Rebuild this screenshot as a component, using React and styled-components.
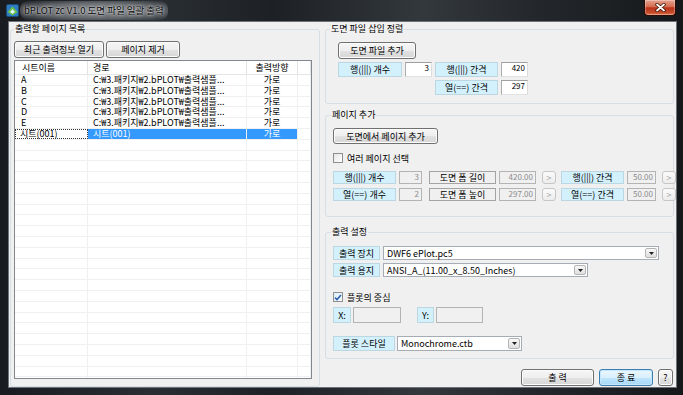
import React from "react";
import styled, { createGlobalStyle } from "styled-components";

const ui = `"Noto Sans CJK KR", "Liberation Sans", sans-serif`;

const GlobalStyle = createGlobalStyle`
  html, body { margin: 0; padding: 0; }
  body { width: 683px; height: 395px; overflow: hidden; background: #16191c; }
  * { box-sizing: border-box; }
`;

const Window = styled.div`
  width: 683px;
  height: 395px;
  display: flex;
  flex-direction: column;
  background: linear-gradient(90deg, #181b1f 0%, #2a2f34 22%, #1d2125 40%, #33383d 62%, #24282c 78%, #15181b 100%);
  font-family: ${ui};
  font-size: 9px;
  color: #000;
`;

const TitleBar = styled.div`
  height: 21px;
  flex-shrink: 0;
  display: flex;
  align-items: flex-start;
  padding-left: 6px;
`;

const AppIcon = styled.svg`
  margin-top: 4px;
  flex-shrink: 0;
`;

const Title = styled.div`
  margin-left: 1px;
  padding: 0 4px;
  margin-top: 1px;
  line-height: 19px;
  font-size: 9.5px;
  color: #0b0b0b;
  border-radius: 8px;
  background: radial-gradient(ellipse at center, rgba(205, 208, 212, 0.6) 0%, rgba(180, 184, 188, 0.45) 55%, rgba(120, 124, 128, 0) 100%);
  text-shadow: 0 0 2px rgba(245, 245, 245, 0.9), 0 0 5px rgba(225, 225, 225, 0.8);
`;

const CloseBtn = styled.div`
  margin-left: auto;
  margin-right: 7px;
  width: 32px;
  height: 16px;
  border: 1px solid #2b0c05;
  border-top: none;
  border-radius: 0 0 4px 4px;
  background: linear-gradient(#e6a28f 0%, #d46c50 45%, #b8321a 52%, #c64d2b 85%, #dc7a55 100%);
  box-shadow: inset 0 0 0 1px rgba(255, 255, 255, 0.3);
  display: flex;
  align-items: center;
  justify-content: center;
`;

const Client = styled.div`
  flex: 1;
  margin: 0 6px 7px 8px;
  border: 1px solid #6c7278;
  background: #f0f0f0;
  display: flex;
  gap: 5px;
  padding: 0 2px 0 1px;
`;

const Group = styled.fieldset`
  margin: 0;
  min-width: 0;
  border: 1px solid #d5dfe5;
  border-radius: 3px;
  padding: ${(p) => p.$pad};
  margin-top: ${(p) => p.$top || 0}px;
`;

const Legend = styled.legend`
  padding: 0 1px;
  margin-left: ${(p) => p.$shift || 0}px;
  line-height: 14px;
  font-size: 9px;
`;

const LeftGroup = styled(Group)`
  width: 310px;
  height: 365px;
`;

const RightColumn = styled.div`
  width: 349px;
  display: flex;
  flex-direction: column;
`;

const Btn = styled.button`
  width: ${(p) => p.$w}px;
  height: ${(p) => p.$h || 17}px;
  padding: 0;
  font-family: ${ui};
  font-size: 9px;
  color: #000;
  border: 1px solid ${(p) => (p.$focus ? "#3c7fb1" : "#707070")};
  border-radius: 3px;
  background: ${(p) =>
    p.$focus
      ? "linear-gradient(#eaf6fd 0%, #d9f0fc 50%, #bee6fd 51%, #a7d9f5 100%)"
      : "linear-gradient(#f6f6f6 0%, #eeeeee 50%, #e2e2e2 51%, #d6d6d6 100%)"};
  box-shadow: inset 0 0 0 1px ${(p) => (p.$focus ? "#c6e7fb" : "#fcfcfc")};
  line-height: 1;
  flex-shrink: 0;
`;

const ButtonRow = styled.div`
  display: flex;
  gap: 2px;
`;

const ListBox = styled.div`
  margin-top: 2px;
  height: 319px;
  border: 1px solid #828790;
  background: #fff;
  overflow: hidden;
  font-size: 9px;
`;

const ListRow = styled.div`
  display: grid;
  grid-template-columns: 73px 159px 51px 1fr;
  height: ${(p) => (p.$head ? "14px" : "10.8px")};
  line-height: ${(p) => (p.$head ? "13px" : "9.8px")};
  border-bottom: 1px solid ${(p) => (p.$head ? "#e5e5e5" : "#f0f0f0")};
`;

const Cell = styled.div`
  border-right: 1px solid ${(p) => (p.$head ? "#e3e3e3" : "#f0f0f0")};
  padding-left: ${(p) => p.$pad || 0}px;
  text-align: ${(p) => (p.$center ? "center" : "left")};
  white-space: nowrap;
  background: ${(p) => (p.$sel ? "#3399ff" : "transparent")};
  color: ${(p) => (p.$sel ? "#fff" : "#000")};
  outline: ${(p) => (p.$focus ? "1px dotted #333" : "none")};
  outline-offset: -1px;
`;

const PairGrid = styled.div`
  margin-top: 3px;
  display: grid;
  grid-template-columns: 64px 27px 63px 27px;
  grid-auto-rows: 15px;
  column-gap: 3px;
  row-gap: 3px;
`;

const Tag = styled.div`
  width: ${(p) => (p.$w ? `${p.$w}px` : "auto")};
  height: 100%;
  flex-shrink: 0;
  margin-left: ${(p) => p.$ml || 0}px;
  display: flex;
  align-items: center;
  justify-content: center;
  white-space: nowrap;
  background: ${(p) => (p.$gray ? "#f0f0f0" : "#d3f1fd")};
  border: 1px solid ${(p) => (p.$gray ? "#a3a3a3" : "#bcd7e2")};
  line-height: 1;
`;

const NumBox = styled.div`
  width: ${(p) => (p.$w ? `${p.$w}px` : "auto")};
  height: 100%;
  flex-shrink: 0;
  margin-left: ${(p) => p.$ml || 0}px;
  background: ${(p) => (p.$off ? "#f0f0f0" : "#fff")};
  border: 1px solid;
  border-color: ${(p) => (p.$off ? "#b4b4b4" : "#a0a0a0 #dcdcdc #e2e2e2 #acacac")};
  color: ${(p) => (p.$off ? "#8c8c8c" : "#000")};
  font-size: 8px;
  line-height: 9px;
  text-align: right;
  padding-right: 2px;
`;

const Arrow = styled.div`
  width: 14px;
  height: 100%;
  flex-shrink: 0;
  margin-left: 3px;
  border: 1px solid #c6c6c6;
  border-radius: 3px;
  background: linear-gradient(#fbfbfb, #ececec);
  color: #a6a6a6;
  font-size: 9px;
  display: flex;
  align-items: center;
  justify-content: center;
`;

const FieldRow = styled.div`
  display: flex;
  align-items: stretch;
  gap: ${(p) => p.$gap ?? 3}px;
  height: ${(p) => p.$h}px;
  margin-top: ${(p) => p.$mt || 0}px;
`;

const CheckRow = styled.label`
  display: flex;
  align-items: center;
  gap: 4px;
  height: 14px;
  margin-top: ${(p) => p.$mt || 0}px;
  line-height: 1;
`;

const Box = styled.span`
  width: 10px;
  height: 10px;
  border: 1px solid #8e8f8f;
  background: ${(p) => (p.$on ? "linear-gradient(135deg, #dbeefb, #f6fbfe)" : "linear-gradient(135deg, #e6e6e6, #ffffff)")};
  display: flex;
  align-items: center;
  justify-content: center;
`;

const Combo = styled.div`
  width: ${(p) => p.$w}px;
  flex-shrink: 0;
  display: flex;
  align-items: center;
  background: #fff;
  border: 1px solid #a5acb5;
  padding: 1px 1px 1px 3px;
  line-height: 1;
  white-space: nowrap;
`;

const ComboText = styled.span`
  flex: 1;
  min-width: 0;
`;

const DropBtn = styled.span`
  width: 12px;
  height: 100%;
  flex-shrink: 0;
  border: 1px solid #b5b5b5;
  border-radius: 2px;
  background: linear-gradient(#f8f8f8, #dedede);
  display: flex;
  align-items: center;
  justify-content: center;
`;

const Footer = styled.div`
  margin-top: 10px;
  display: flex;
  justify-content: flex-end;
  padding-right: 1px;
  gap: 5px;
`;

const sheetPath = "C:₩3.패키지₩2.bPLOT₩출력샘플...";
const sheets = [
  { name: "A", path: sheetPath },
  { name: "B", path: sheetPath },
  { name: "C", path: sheetPath },
  { name: "D", path: sheetPath },
  { name: "E", path: sheetPath },
  { name: "시트(001)", path: "시트(001)", selected: true },
];
const emptyRows = Array.from({ length: 24 });

const Caret = () => (
  <svg width="5" height="3" viewBox="0 0 5 3">
    <path d="M0 0 H5 L2.5 3 Z" fill="#222" />
  </svg>
);

const Tick = () => (
  <svg width="8" height="7" viewBox="0 0 8 7">
    <path d="M1 3.6 L3 5.6 L7 1" fill="none" stroke="#2d62b0" strokeWidth="1.6" />
  </svg>
);

const Dropdown = ({ w, value }) => (
  <Combo $w={w}>
    <ComboText>{value}</ComboText>
    <DropBtn>
      <Caret />
    </DropBtn>
  </Combo>
);

export default function App() {
  return (
    <Window>
      <GlobalStyle />
      <TitleBar>
        <AppIcon width="13" height="13" viewBox="0 0 13 13">
          <rect x="0.5" y="0.5" width="12" height="12" rx="1.5" fill="#2f7cc0" stroke="#1b4c7d" />
          <path d="M1.5 8 L6.5 2.5 L11.5 8 L6.5 11.5 Z" fill="#6cc24a" />
          <path d="M4 8 L6.5 5.2 L9 8 L6.5 9.8 Z" fill="#dff1ff" />
        </AppIcon>
        <Title>bPLOT zc V1.0 도면 파일 일괄 출력</Title>
        <CloseBtn>
          <svg width="11" height="9" viewBox="0 0 11 9">
            <path d="M2 1.5 L9 7.5 M9 1.5 L2 7.5" stroke="#3a1107" strokeWidth="3.4" strokeLinecap="round" />
            <path d="M2 1.5 L9 7.5 M9 1.5 L2 7.5" stroke="#fff" strokeWidth="1.8" strokeLinecap="round" />
          </svg>
        </CloseBtn>
      </TitleBar>

      <Client>
        <LeftGroup $pad="5px 7px 7px 3px">
          <Legend>출력할 페이지 목록</Legend>
          <ButtonRow>
            <Btn $w={90}>최근 출력정보 열기</Btn>
            <Btn $w={74}>페이지 제거</Btn>
          </ButtonRow>
          <ListBox>
            <ListRow $head>
              <Cell $head $pad={7}>시트이름</Cell>
              <Cell $head $pad={5}>경로</Cell>
              <Cell $head $center>출력방향</Cell>
              <Cell $head />
            </ListRow>
            {sheets.map((s) => (
              <ListRow key={s.name}>
                <Cell $pad={s.selected ? 5 : 6} $focus={s.selected}>{s.name}</Cell>
                <Cell $pad={5} $sel={s.selected}>{s.path}</Cell>
                <Cell $center $sel={s.selected}>가로</Cell>
                <Cell />
              </ListRow>
            ))}
            {emptyRows.map((_, i) => (
              <ListRow key={i}>
                <Cell />
                <Cell />
                <Cell />
                <Cell />
              </ListRow>
            ))}
          </ListBox>
        </LeftGroup>

        <RightColumn>
          <Group $pad="6px 7px 8px 12px">
            <Legend $shift={-8}>도면 파일 삽입 정렬</Legend>
            <Btn $w={78}>도면 파일 추가</Btn>
            <PairGrid>
              <Tag>행(|||) 개수</Tag>
              <NumBox>3</NumBox>
              <Tag>행(|||) 간격</Tag>
              <NumBox>420</NumBox>
              <span />
              <span />
              <Tag>열(==) 간격</Tag>
              <NumBox>297</NumBox>
            </PairGrid>
          </Group>

          <Group $top={4} $pad="6px 7px 15px 7px">
            <Legend $shift={-2}>페이지 추가</Legend>
            <Btn $w={105} $h={16}>도면에서 페이지 추가</Btn>
            <CheckRow $mt={7}>
              <Box />
              여러 페이지 선택
            </CheckRow>
            <FieldRow $h={13} $mt={6}>
              <Tag $w={63}>행(|||) 개수</Tag>
              <NumBox $w={23} $off>3</NumBox>
              <Tag $w={67} $gray $ml={4}>도면 폼 길이</Tag>
              <NumBox $w={37} $off>420.00</NumBox>
              <Arrow>&gt;</Arrow>
              <Tag $w={63} $ml={2}>행(|||) 간격</Tag>
              <NumBox $w={29} $off>50.00</NumBox>
              <Arrow>&gt;</Arrow>
            </FieldRow>
            <FieldRow $h={13} $mt={4}>
              <Tag $w={63}>열(==) 개수</Tag>
              <NumBox $w={23} $off>2</NumBox>
              <Tag $w={67} $gray $ml={4}>도면 폼 높이</Tag>
              <NumBox $w={37} $off>297.00</NumBox>
              <Arrow>&gt;</Arrow>
              <Tag $w={63} $ml={2}>열(==) 간격</Tag>
              <NumBox $w={29} $off>50.00</NumBox>
              <Arrow>&gt;</Arrow>
            </FieldRow>
          </Group>

          <Group $top={8} $pad="7px 7px 7px 7px">
            <Legend $shift={-2}>출력 설정</Legend>
            <FieldRow $h={14}>
              <Tag $w={47}>출력 장치</Tag>
              <Dropdown w={276} value="DWF6 ePlot.pc5" />
            </FieldRow>
            <FieldRow $h={14} $mt={3}>
              <Tag $w={47}>출력 용지</Tag>
              <Dropdown w={205} value="ANSI_A_(11.00_x_8.50_Inches)" />
            </FieldRow>
            <CheckRow $mt={13}>
              <Box $on>
                <Tick />
              </Box>
              플롯의 중심
            </CheckRow>
            <FieldRow $h={16} $mt={3} $gap={2}>
              <Tag $w={18}>X:</Tag>
              <NumBox $w={48} $off />
              <Tag $w={17} $ml={14}>Y:</Tag>
              <NumBox $w={47} $off />
            </FieldRow>
            <FieldRow $h={15} $mt={13} $gap={2}>
              <Tag $w={62}>플롯 스타일</Tag>
              <Dropdown w={125} value="Monochrome.ctb" />
            </FieldRow>
          </Group>

          <Footer>
            <Btn $w={73}>출 력</Btn>
            <Btn $w={54} $focus>종 료</Btn>
            <Btn $w={15}>?</Btn>
          </Footer>
        </RightColumn>
      </Client>
    </Window>
  );
}
